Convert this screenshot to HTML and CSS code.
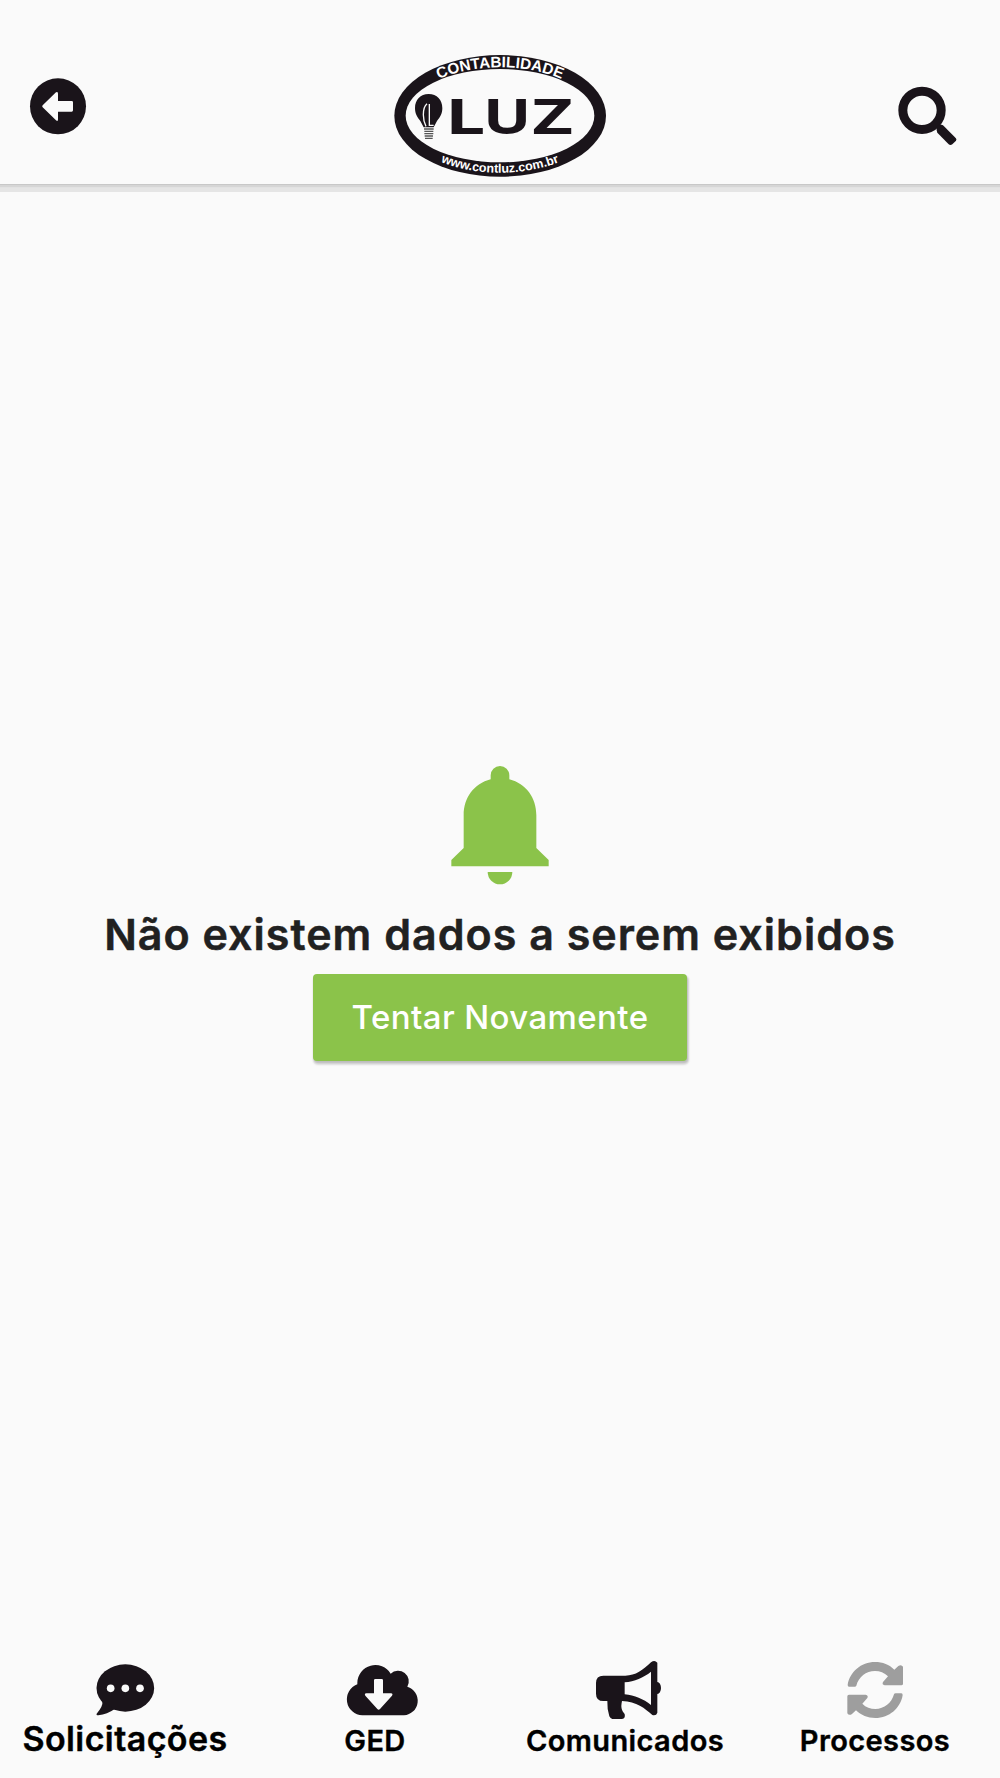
FILE: index.html
```html
<!DOCTYPE html>
<html lang="pt-BR">
<head>
  <meta charset="UTF-8">
  <meta name="viewport" content="width=device-width, initial-scale=1.0">
  <title>Contabilidade Luz</title>
  <link rel="stylesheet" href="styles.css">
</head>
<body>
  <header class="topbar">
    <svg class="topbar-icon" viewBox="0 -60 450 432">
      <circle cx="174" cy="139" r="84"/>
      <path class="cutout" d="M128 136L168 97Q174 93 174 101V123H215Q219 123 219 127V151Q219 155 215 155H174V178Q174 186 168 181L128 142Q125 139 128 136Z"/>
    </svg>

    <svg class="logo" viewBox="0 0 720 432">
      <defs>
        <path id="arcTop" d="M77 228A283 146 0 0 1 643 228"/>
        <path id="arcBottom" d="M54 227A306 171 0 0 0 666 227"/>
      </defs>
      <ellipse cx="360.500" cy="227.500" rx="317.500" ry="182.500"/>
      <ellipse class="cutout" cx="360" cy="227" rx="283" ry="140"/>
      <text class="logo-arc top"><textPath href="#arcTop" startOffset="50%">CONTABILIDADE</textPath></text>
      <text class="logo-arc bottom"><textPath href="#arcBottom" startOffset="50%">www.contluz.com.br</textPath></text>
      <!-- lâmpada -->
      <path d="M146 162C121 162 105 180 105 204C105 222 112 231 121 243L131 262H161L171 243C180 231 187 222 187 204C187 180 171 162 146 162Z"/>
      <path class="filament" d="M141 191Q130 200 130 224Q130 243 138 259M148 192V256H161"/>
      <path class="socket" d="M132 267H161M133 274H160M133 281H160M134 288H159M135 295H158"/>
      <text class="logo-name" y="283"><tspan x="196" textLength="120" lengthAdjust="spacingAndGlyphs">L</tspan><tspan x="309" textLength="145" lengthAdjust="spacingAndGlyphs">U</tspan><tspan x="457" textLength="122" lengthAdjust="spacingAndGlyphs">Z</tspan></text>
    </svg>

    <svg class="topbar-icon" viewBox="-30 -60 450 432">
      <circle class="lens" cx="186" cy="151" r="57.500"/>
      <path d="M231 200L237 194Q243 192 249 196L287 234Q291 238 288 242L277 253Q271 257 266 253L232 218Q228 210 231 200Z"/>
    </svg>
  </header>

  <main class="empty">
    <svg class="bell" viewBox="30 30 360 390">
      <path d="M182 88V76A28 28 0 0 1 238 76V88C288 101 319 143 319 196V294L356 330V349H64V330L101 294V196C101 143 132 101 182 88Z"/>
      <path d="M173 366H247A37 37 0 0 1 173 366Z"/>
    </svg>
    <h1 class="empty-title">Não existem dados a serem exibidos</h1>
    <button class="retry">Tentar Novamente</button>
  </main>

  <nav class="tabs">
    <a class="tab tab-large">
      <svg viewBox="225 45 300 195">
        <ellipse cx="376" cy="144" rx="86.500" ry="71"/>
        <path d="M307 184Q310 198 290 221Q288 226 295 226Q322 223 344 207Z"/>
        <g class="cutout"><circle cx="332" cy="145" r="11.500"/><circle cx="376" cy="145" r="11.500"/><circle cx="420" cy="145" r="11.500"/></g>
      </svg>
      <span>Solicitações</span>
    </a>
    <a class="tab">
      <svg viewBox="15 45 300 195">
        <path d="M127 226A48 48 0 0 1 112 133V128A54 54 0 0 1 212 101A32 32 0 0 1 262 140A44 44 0 0 1 252 226Z"/>
        <path class="cutout" d="M162 121Q162 117 166 117H185Q189 117 189 121V160H213Q220 161 216 167L180 207Q176 211 172 207L136 167Q132 161 139 160H162Z"/>
      </svg>
      <span>GED</span>
    </a>
    <a class="tab">
      <svg viewBox="225 45 300 195">
        <path d="M310 107H376C407 107 429 90 453 67Q464 59 472 68V126A11 18 0 0 1 472 162V218Q469 228 457 225C435 206 410 184 366 183C362 202 364 210 374 222Q377 235 366 237H337Q331 236 328 229Q321 206 322 183H310Q288 183 288 161V129Q288 107 310 107Z"/>
        <path class="cutout" d="M374 127C404 125 430 113 453 95V195C430 177 404 166 374 163Z"/>
      </svg>
      <span>Comunicados</span>
    </a>
    <a class="tab">
      <svg class="muted" viewBox="135 45 300 195">
        <path id="half" d="M203 135C209 96 243 66 285 66C308 66 328 74 343 89L355 78Q364 72 369 80V131Q369 136 364 136H314Q305 134 309 126L324 109C313 98 300 93 285 93C258 93 236 111 229 137Q228 140 224 140H207Q203 140 203 135Z"/>
        <use href="#half" transform="rotate(180 285.500 150)"/>
      </svg>
      <span>Processos</span>
    </a>
  </nav>
</body>
</html>
```

FILE: styles.css
```css
body {
  margin: 0;
  display: flex;
  flex-direction: column;
  height: 1778px;
  background: #fafafa;
  font-family: Inter, "Liberation Sans", sans-serif;
  overflow: hidden;
}

svg {
  display: block;
  fill: #1a141a;
}

.cutout {
  fill: #fafafa;
}

.topbar {
  display: flex;
  justify-content: space-between;
  padding-top: 40px;
  box-shadow: 0 1px 0 #c8c8c8, 0 3px 1px #d6d6d6, 0 8px 0 #e5e5e5;
}

.topbar-icon {
  width: 150px;
  height: 144px;
}

.logo {
  width: 240px;
  height: 144px;
}

.logo-arc {
  fill: #fff;
  font-family: "Liberation Sans", sans-serif;
  font-weight: bold;
  text-anchor: middle;
}

.logo-arc.top {
  font-size: 46px;
}

.logo-arc.bottom {
  font-size: 37.5px;
}

.logo-name {
  font-family: "Open Sans", sans-serif;
  font-weight: bold;
  font-size: 147px;
}

.filament {
  fill: none;
  stroke: #fafafa;
  stroke-width: 4;
}

.socket {
  stroke: #555;
  stroke-width: 4;
}

.lens {
  fill: none;
  stroke: #1a141a;
  stroke-width: 27;
}

.empty {
  flex: 1;
  display: flex;
  flex-direction: column;
  align-items: center;
  padding-top: 576px;
}

.bell {
  width: 120px;
  height: 130px;
  fill: #8bc34a;
}

.empty-title {
  margin: 19px 0 15px;
  color: #212121;
  font-size: 43px;
  font-weight: 600;
  line-height: 50px;
  letter-spacing: 1px;
  white-space: nowrap;
  -webkit-text-stroke: 0.5px #212121;
}

.retry {
  width: 374px;
  height: 87px;
  padding: 0 0 2px;
  border: 0;
  border-radius: 4px;
  background: #8bc34a;
  box-shadow: 1px 2px 2px #bbb, 1px 3px 2px 1px #ddd;
  color: #fff;
  font-family: inherit;
  font-size: 33px;
  font-weight: 500;
  letter-spacing: 0.4px;
}

.tabs {
  display: flex;
  height: 123px;
}

.tab {
  flex: 1;
  display: flex;
  flex-direction: column;
  align-items: center;
  color: #000;
  font-size: 29px;
  font-weight: 600;
  line-height: 40px;
  letter-spacing: 0.4px;
  -webkit-text-stroke: 0.4px #000;
}

.tab svg {
  width: 100px;
  height: 65px;
}

.tab span {
  margin-top: 1px;
}

.tab-large {
  font-size: 34px;
}

.tab-large span {
  margin-top: -1px;
}

.tab .muted {
  fill: #9e9e9e;
}
```
